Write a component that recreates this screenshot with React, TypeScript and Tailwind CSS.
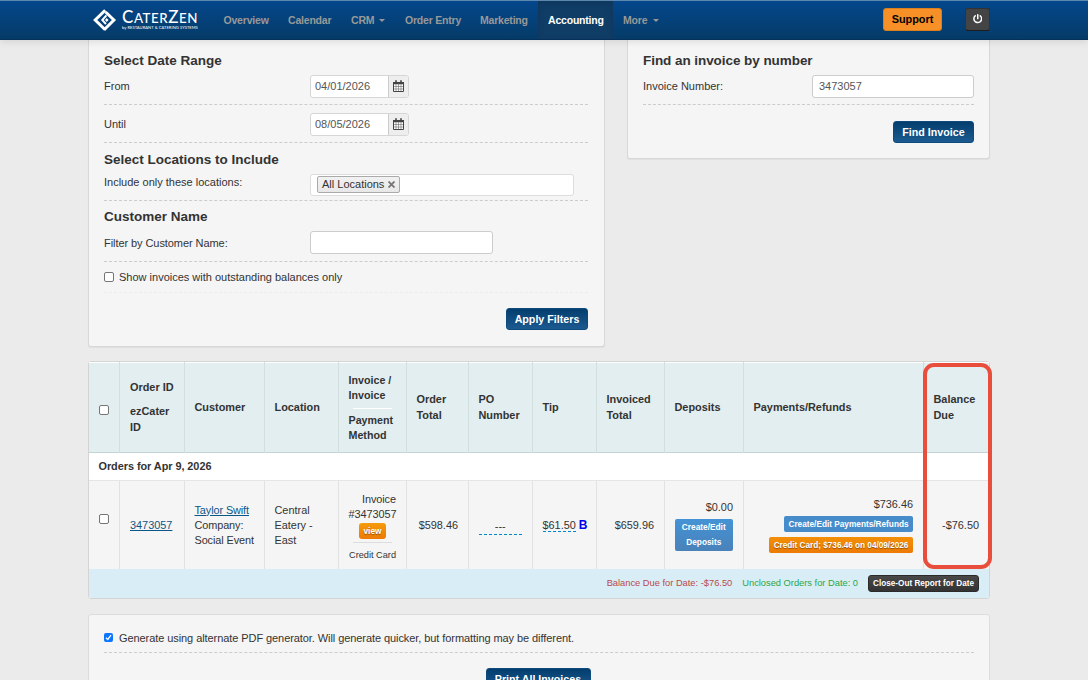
import type { ReactNode } from "react";
import { FaPowerOff } from "react-icons/fa";

const navItems = [
  { label: "Overview", width: "w-[44.5px]" },
  { label: "Calendar", width: "w-[43px]" },
  { label: "CRM", width: "w-[23.5px]", caret: true },
  { label: "Order Entry", width: "w-[55px]" },
  { label: "Marketing", width: "w-[48px]" },
  { label: "Accounting", width: "w-[55px]", active: true },
  { label: "More", width: "w-[25px]", caret: true },
];

const columns = [30, 65, 80, 74, 68, 62, 64, 64, 68, 79, 180, 66];

const Logo = () => (
  <div className="flex text-white">
    <svg width="30" height="28" viewBox="0 0 30 28" className="block shrink-0">
      <path d="M13.2 4.2 3.2 14l10 9.8" fill="none" stroke="#fff" strokeWidth="3" />
      <path d="M13.6 6 21.9 14l-9.7 9.8" fill="none" stroke="#fff" strokeWidth="3" />
      <path d="M14.4 9.4 10.3 14l3.6 4" fill="none" stroke="#fff" strokeWidth="2" />
      <path d="M14.7 12 16.6 14l-1.9 1.9-1.7-1.9z" fill="#fff" />
    </svg>
    <div className="font-['Lato',sans-serif] whitespace-nowrap">
      <div className="h-[19px] pt-[1px] text-[13.3px] leading-[20px] font-medium tracking-[0.55px]">
        <span className="text-[17px]">C</span>ATER<span className="text-[17px]">Z</span>EN
      </div>
      <div className="text-[4.1px] leading-[5px] font-normal tracking-[0.04px]">by RESTAURANT &amp; CATERING SYSTEMS</div>
    </div>
  </div>
);

const CalendarIcon = () => (
  <svg width="11" height="12" viewBox="0 0 11 12" className="mb-[1px]">
    <path d="M.5 2.5h10v9H.5z" fill="#fff" stroke="#444" />
    <path d="M0 2h11v2.3H0z" fill="#444" />
    <path d="M3 .2v3M8 .2v3" stroke="#444" strokeWidth="1.6" />
    <path d="M3 4v7M5.5 4v7M8 4v7M1 6.5h9M1 9h9" stroke="#666" strokeWidth=".6" />
  </svg>
);

const Heading = ({ className, children }: { className: string; children: ReactNode }) => (
  <h3 className={`text-[13.5px] leading-5 font-bold text-[#333] ${className}`}>{children}</h3>
);

const Row = ({ className, children }: { className: string; children: ReactNode }) => (
  <div className={`flex items-start border-b border-dashed border-[#ccc] ${className}`}>{children}</div>
);

const Checkbox = ({ checked = false }: { checked?: boolean }) =>
  checked ? (
    <span className="flex size-[9px] shrink-0 items-center justify-center rounded-[2px] bg-[#0a75ff]">
      <svg width="7" height="7" viewBox="0 0 7 7">
        <path d="M1 3.7 2.8 5.5 6 1.2" fill="none" stroke="#fff" strokeWidth="1.3" />
      </svg>
    </span>
  ) : (
    <span className="block size-[10px] shrink-0 rounded-[2px] border border-[#767676] bg-white" />
  );

const DateField = ({ value }: { value: string }) => (
  <div className="flex h-[23px] w-[99px] overflow-hidden rounded-[3px] border border-[#d6d6d6] bg-white">
    <span className="w-[78px] border-r border-[#ccc] pl-[4px] leading-[21px] text-[#555]">{value}</span>
    <span className="flex flex-1 items-center justify-center bg-[#eee]">
      <CalendarIcon />
    </span>
  </div>
);

const PrimaryButton = ({ className, children }: { className: string; children: ReactNode }) => (
  <button
    className={`h-[22px] rounded-[3px] border border-[#0f4a7c] bg-gradient-to-b from-[#043e6e] to-[#1b5a90] text-[10.7px] leading-[20px] font-bold whitespace-nowrap text-white ${className}`}
  >
    {children}
  </button>
);

const Th = ({ className = "", children }: { className?: string; children: ReactNode }) => (
  <th className={`border-l border-[#d3dfdf] pl-[9.5px] text-left align-middle font-bold ${className}`}>{children}</th>
);

const Td = ({ className = "", children }: { className?: string; children: ReactNode }) => (
  <td className={`border-l border-[#e2e2e2] pt-[1px] pr-[10px] pl-[9.5px] align-middle whitespace-nowrap ${className}`}>
    {children}
  </td>
);

const Navbar = () => (
  <header className="relative z-10 flex h-10 border-t border-b border-t-[#5c87ae] border-b-[#04305a] bg-gradient-to-b from-[#04478c] to-[#053b68] shadow-[0_1px_8px_rgba(0,0,0,0.12)]">
    <div className="ml-[92px] w-[121.5px] pt-[5px]">
      <Logo />
    </div>
    <nav className="flex text-[10.5px] font-bold tracking-[-0.2px] whitespace-nowrap text-[#999]">
      {navItems.map((item) => (
        <a
          key={item.label}
          className={`flex items-center px-[10px] pt-[1px] ${item.active ? "bg-[#103d66] text-white shadow-[inset_0_2px_6px_rgba(0,0,0,0.12)]" : ""}`}
        >
          <span className={item.width}>{item.label}</span>
          {item.caret && (
            <span className="mb-[1px] ml-[4.5px] border-x-[3.5px] border-t-[3.5px] border-x-transparent border-t-[#999]" />
          )}
        </a>
      ))}
    </nav>
    <div className="mr-[98px] ml-auto flex gap-[23px] pt-[7px]">
      <button className="h-[23px] w-[59px] rounded-[3px] border border-[#d97f1e] bg-[#f79027] pb-[1px] text-[10.9px] leading-[19px] font-bold text-black">
        Support
      </button>
      <button className="flex h-[23px] w-[25px] items-center justify-center rounded-[3px] border border-[#333] border-b-[#1c1c1c] bg-[#444] pb-[1px] text-white">
        <FaPowerOff size={9.5} />
      </button>
    </div>
  </header>
);

const FiltersPanel = () => (
  <section className="h-[307px] w-[517px] rounded-b-[3px] border border-t-0 border-[#d8d8d8] bg-[#f5f5f5] pr-4 pl-[15px] shadow-[0_1px_1px_rgba(0,0,0,0.05)]">
    <Heading className="h-8 pt-[10.5px]">Select Date Range</Heading>
    <Row className="h-[33px] pt-[3px]">
      <label className="w-[206px] leading-[23px]">From</label>
      <DateField value="04/01/2026" />
    </Row>
    <Row className="h-[38px] pt-2">
      <label className="w-[206px] leading-[23px]">Until</label>
      <DateField value="08/05/2026" />
    </Row>
    <Heading className="h-[29px] pt-[6.5px]">Select Locations to Include</Heading>
    <Row className="h-[29px] pt-[2px]">
      <label className="w-[206px] leading-4">Include only these locations:</label>
      <div className="flex h-[22px] w-[264px] rounded-[3px] border border-[#ddd] bg-white py-[1px] pl-[6px]">
        <span className="flex h-[17px] w-[83px] items-center rounded-[2px] border border-[#aaa] bg-gradient-to-b from-[#f2f2f2] to-[#e8e8e8] pl-1 whitespace-nowrap">
          All Locations
          <svg width="7" height="7" viewBox="0 0 7 7" className="ml-[4px]">
            <path d="M.5.5l6 6M6.5.5l-6 6" stroke="#777" strokeWidth="1.8" />
          </svg>
        </span>
      </div>
    </Row>
    <Heading className="h-7 pt-[6px]">Customer Name</Heading>
    <Row className="h-[33px] pt-[2px]">
      <label className="w-[206px] tracking-[-0.07px] leading-6">Filter by Customer Name:</label>
      <div className="h-[23px] w-[183px] rounded-[3px] border border-[#ccc] bg-white" />
    </Row>
    <div className="flex h-[31px] items-center gap-[5px] border-b border-dashed border-[#ececec]">
      <Checkbox />
      <span>Show invoices with outstanding balances only</span>
    </div>
    <div className="flex justify-end pt-[15px]">
      <PrimaryButton className="w-[82px]">Apply Filters</PrimaryButton>
    </div>
  </section>
);

const FindInvoicePanel = () => (
  <section className="h-[119px] w-[363px] rounded-b-[3px] border border-t-0 border-[#d8d8d8] bg-[#f5f5f5] px-[15px] shadow-[0_1px_1px_rgba(0,0,0,0.05)]">
    <Heading className="h-8 pt-[10.5px] tracking-[-0.06px]">Find an invoice by number</Heading>
    <Row className="h-[33px] justify-between pt-[3px]">
      <label className="leading-[23px]">Invoice Number:</label>
      <div className="h-[23px] w-[162px] rounded-[3px] border border-[#ccc] bg-white pl-[6px] leading-[21px] text-[#555]">
        3473057
      </div>
    </Row>
    <div className="flex justify-end pt-4">
      <PrimaryButton className="w-[81px]">Find Invoice</PrimaryButton>
    </div>
  </section>
);

const InvoiceTable = () => (
  <section className="relative h-[238px] w-[902px] rounded-[3px] border border-[#d4d4d4] bg-white">
    <table className="w-[900px] table-fixed border-separate border-spacing-0 text-[10.9px] leading-[15.3px]">
      <colgroup>
        {columns.map((width, i) => (
          <col key={i} style={{ width }} />
        ))}
      </colgroup>
      <thead>
        <tr className="h-[91px] bg-[#e2eef0] shadow-[inset_0_1px_0_#fff,inset_0_-1px_0_#c5d3d4]">
          <th className="pt-[4px] pl-[10px] align-middle">
            <Checkbox />
          </th>
          <Th className="pl-[10px]">
            <div>Order ID</div>
            <div className="mt-[9px]">ezCater<br />ID</div>
          </Th>
          <Th>Customer</Th>
          <Th>Location</Th>
          <Th className="pt-[1px] text-[10.7px]">
            <div>Invoice /<br />Invoice</div>
            <hr className="mt-[4px] mr-[14px] mb-[4px] ml-1 border-white" />
            <div>Payment<br />Method</div>
          </Th>
          <Th>Order<br />Total</Th>
          <Th>PO<br />Number</Th>
          <Th>Tip</Th>
          <Th>Invoiced<br />Total</Th>
          <Th>Deposits</Th>
          <Th>Payments/Refunds</Th>
          <Th>Balance<br />Due</Th>
        </tr>
      </thead>
      <tbody>
        <tr className="h-7">
          <td colSpan={12} className="border-b border-[#e5e5e5] pl-[9.5px] font-bold tracking-[-0.05px]">
            Orders for Apr 9, 2026
          </td>
        </tr>
        <tr className="h-[88px] bg-[#f5f5f5]">
          <td className="pb-[12px] pl-[10px] align-middle">
            <Checkbox />
          </td>
          <Td className="pt-[2px] pl-[10px]">
            <a className="text-[#0a5687] underline">3473057</a>
          </Td>
          <Td className="tracking-[-0.1px]">
            <a className="text-[#0a5687] underline">Taylor Swift</a>
            <br />Company:<br />Social Event
          </Td>
          <Td>Central<br />Eatery -<br />East</Td>
          <Td className="pt-[5px] text-right">
            <div className="tracking-[-0.07px]">Invoice<br />#3473057</div>
            <div className="mr-[10px] ml-auto h-4 w-[27px] rounded-[3px] bg-gradient-to-b from-[#f59b0c] to-[#ec7a05] text-center text-[8.3px] leading-4 font-bold text-white [text-shadow:0_1px_1px_rgba(0,0,0,0.4)]">
              view
            </div>
            <hr className="mt-[3px] mr-1 mb-[5px] ml-1 border-[#ddd]" />
            <div className="text-[9.2px]">Credit Card</div>
          </Td>
          <Td className="pt-[2px] text-right">$598.46</Td>
          <Td className="text-center">
            <span className="mt-[3px] block border-b border-dashed border-[#0088cc]">---</span>
          </Td>
          <Td>
            <span className="inline-block border-b border-dashed border-[#0088cc] leading-3">$61.50</span>
            <span className="ml-[3px] text-[12px] font-semibold text-[#0000ee]">B</span>
          </Td>
          <Td className="pt-[2px] text-right">$659.96</Td>
          <Td className="pt-0 text-right">
            <div>$0.00</div>
            <div className="mt-[3px] h-8 rounded-[2px] bg-gradient-to-b from-[#4493d6] to-[#4982b9] pt-[1px] text-center text-[8.3px] leading-[15.5px] font-bold text-white">
              Create/Edit<br />Deposits
            </div>
          </Td>
          <Td className="pt-0 pb-[1px]">
            <div className="flex flex-col items-end">
              <span>$736.46</span>
              <span className="mt-[4px] h-4 w-[129px] rounded-[2px] bg-[#468bca] text-center text-[8.25px] leading-[17px] font-bold text-white">
                Create/Edit Payments/Refunds
              </span>
              <span className="mt-[5px] h-4 w-[144px] rounded-[2px] bg-gradient-to-b from-[#f38f05] to-[#ec7a05] text-center text-[8.2px] leading-[17px] font-bold text-white [text-shadow:0_1px_1px_rgba(0,0,0,0.4)]">
                Credit Card; $736.46 on 04/09/2026
              </span>
            </div>
          </Td>
          <Td className="pt-[2px] text-right">-$76.50</Td>
        </tr>
      </tbody>
    </table>
    <div className="flex h-[29px] items-center justify-end rounded-b-[3px] bg-[#d9edf7] pr-[10px] text-[9.3px]">
      <span className="text-[#b94a48]">Balance Due for Date: -$76.50</span>
      <span className="ml-[10px] text-[#28a745]">Unclosed Orders for Date: 0</span>
      <button className="ml-[10px] h-[17px] w-[111px] rounded-[3px] border border-[#2a2a2a] bg-gradient-to-b from-[#484848] to-[#333] text-[8.2px] leading-[16px] font-bold whitespace-nowrap text-white">
        Close-Out Report for Date
      </button>
    </div>
    {/* highlight around the balance column */}
    <div className="absolute top-[1px] -right-[3px] h-[206px] w-[69px] rounded-[11px] border-4 border-[#e84e3b]" />
  </section>
);

const PrintPanel = () => (
  <section className="h-[100px] w-[902px] rounded-[3px] border border-[#dcdcdc] bg-[#f5f5f5] px-[15px]">
    <Row className="h-[38px] items-center gap-[6px] pt-[17px]">
      <span className="pt-[1px]">
        <Checkbox checked />
      </span>
      <span className="tracking-[-0.075px] leading-3">
        Generate using alternate PDF generator. Will generate quicker, but formatting may be different.
      </span>
    </Row>
    <div className="flex justify-center pt-[15px] pr-[2px]">
      <PrimaryButton className="w-[105px]">Print All Invoices</PrimaryButton>
    </div>
  </section>
);

const App = () => {
  return (
    <div className="h-[680px] w-[1088px] overflow-hidden bg-[#ebebeb] font-['Liberation_Sans',Arial,sans-serif] text-[11px] text-[#333]">
      <Navbar />
      <main className="flex w-[990px] flex-col pl-[88px]">
        <div className="flex items-start justify-between">
          <FiltersPanel />
          <FindInvoicePanel />
        </div>
        <div className="mt-[14px]">
          <InvoiceTable />
        </div>
        <div className="mt-[15px]">
          <PrintPanel />
        </div>
      </main>
    </div>
  );
};

export default App;
